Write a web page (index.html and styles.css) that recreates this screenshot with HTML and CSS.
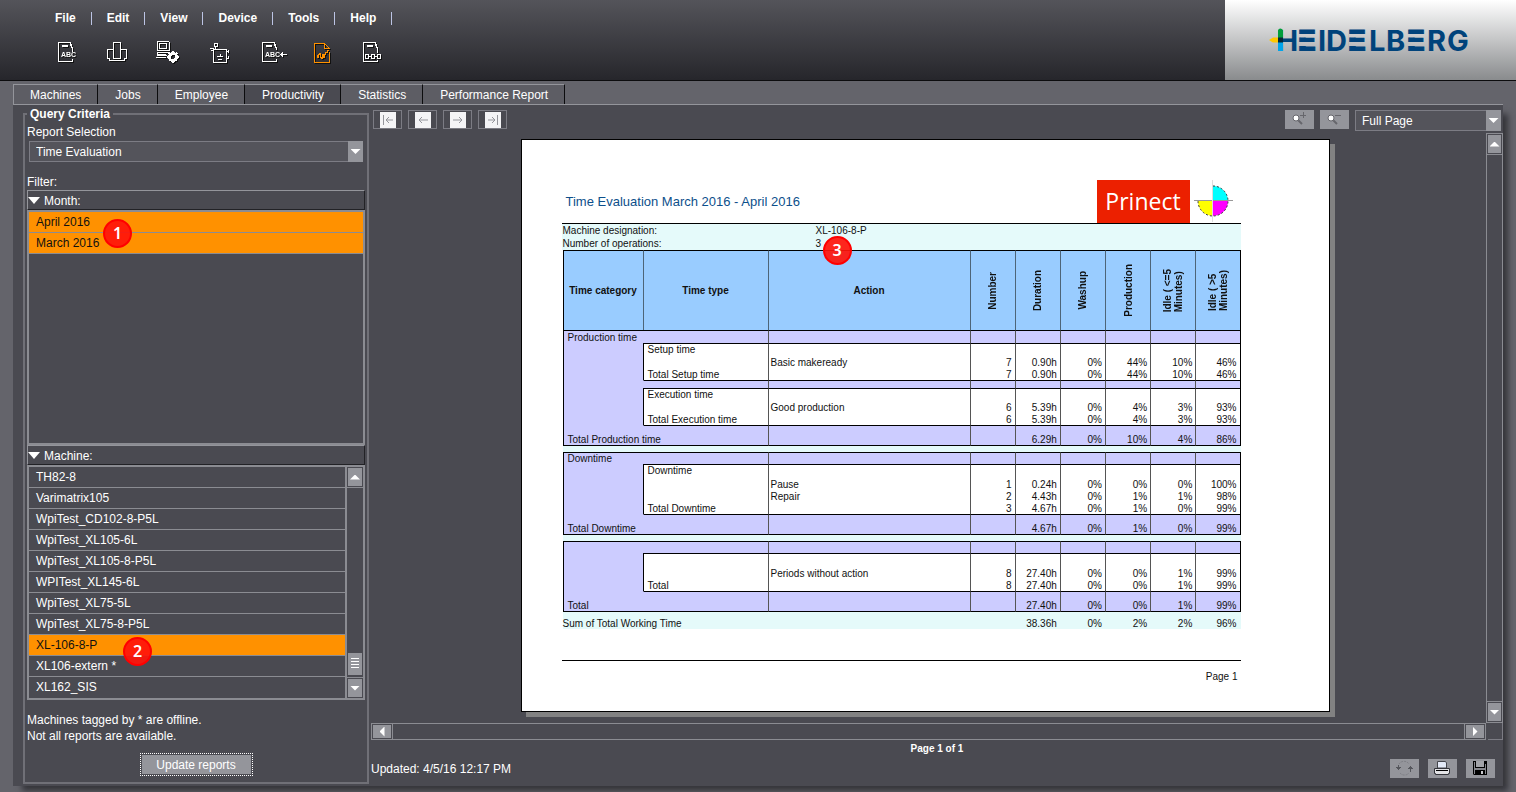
FILE: index.html
```html
<!DOCTYPE html>
<html lang="en">
<head>
    <meta charset="UTF-8">
    <meta name="viewport" content="width=device-width, initial-scale=1.0">
    <title>Heidelberg - Productivity</title>
    <link rel="stylesheet" href="styles.css">
</head>
<body>
    <header class="header">
        <div class="header-main">
            <nav class="menu">
                <a href="#">File</a>
                <a href="#">Edit</a>
                <a href="#">View</a>
                <a href="#">Device</a>
                <a href="#">Tools</a>
                <a href="#">Help</a>
            </nav>
            <div class="tools">
                <button type="button" aria-label="Job list">
                    <svg width="27" height="26" viewBox="0 0 27 26">
                        <path d="M17.5 3.5h-12v19h14v-3M17.5 3v4M18.5 5v4M19.5 8v5"/>
                        <path class="thick" d="M9 7h6"/>
                        <text x="8" y="18">ABC</text>
                    </svg>
                </button>
                <button type="button" aria-label="Machines">
                    <svg width="27" height="26" viewBox="0 0 27 26">
                        <path d="M9.500 19.500v-16h7v16zM9 10.500h-5.500v9h2v2h15v-2h2v-9h-6"/>
                    </svg>
                </button>
                <button type="button" aria-label="Device settings">
                    <svg width="27" height="26" viewBox="0 0 27 26">
                        <path d="M2.500 2.500h11l1 1v8h-12zM4.500 4.500h7v5h-7zM2 13.500h12M1.500 16.500h10M3 15.500h8M1 18.500h10M2.500 13v3"/>
                        <circle cx="18" cy="18" r="3.500" stroke-width="3"/>
                        <path stroke-width="2" d="M18 12v2M18 22v2M12 18h2M22 18h2M14 14l1 1M21 21l1 1M22 14l-1 1M14 22l1-1"/>
                    </svg>
                </button>
                <button type="button" aria-label="Operator">
                    <svg width="27" height="26" viewBox="0 0 27 26">
                        <path d="M8.500 4.500h3v3h-3zM9.500 8v2M4 9.500h3M5 11.500h3M7.500 9v14h13v-13h-13M11 17.500h6M12 20.500h4M14 15v3M20 12.500h3M20 19.500h3M22.500 11v3M22.500 17v3"/>
                    </svg>
                </button>
                <button type="button" aria-label="Import job">
                    <svg width="30" height="26" viewBox="0 0 30 26">
                        <path d="M17.500 3.500h-12v19h14v-3M17.500 3v4M18.500 5v4M19.500 8v3"/>
                        <path class="thick" d="M9 7h6"/>
                        <text x="8" y="18">ABC</text>
                        <path d="M23 15.500h7M24.500 14v3M25.500 13v5"/>
                    </svg>
                </button>
                <button type="button" class="active" aria-label="Reports">
                    <svg width="27" height="26" viewBox="0 0 27 26">
                        <path d="M16.500 4.500h-10v19h15v-11M16.500 4v5h5M17 5l4 4M9 16v2h1v-3h1v-1h1v4h1v1h1v-4h1v3h1v-3h1v-2h2v-2h2"/>
                    </svg>
                </button>
                <button type="button" aria-label="Workflow">
                    <svg width="27" height="26" viewBox="0 0 27 26">
                        <path d="M16.500 3.500h-12v19h14v-2M16.500 3v4M17.500 5v4M18.500 8v6M6.500 15.500h3v4h-3zM12.500 15.500h3v4h-3zM18.500 15.500h3v4h-3zM10 17.500h2M16 17.500h2"/>
                        <path class="thick" d="M8 7h6"/>
                    </svg>
                </button>
            </div>
        </div>
        <div class="brand">
            <svg width="200" height="40" viewBox="0 -8 200 40" role="img" aria-label="Heidelberg">
                <defs>
                    <!-- full height for every letter but E, three bars for each E -->
                    <clipPath id="bars">
                        <path d="M0-8h29v40H0zM49-8h31v40H49zM100-8h38v40h-38zM157-8h43v40h-43zM29 1h171v5H29zM29 9.400h171v4.700H29zM29 18h171v5H29z"/>
                    </clipPath>
                </defs>
                <text clip-path="url(#bars)" y="22.500" x="7.500 28 49 57 78 100 117 137 158 178">H<tspan class="bar-letter">E</tspan>ID<tspan class="bar-letter">E</tspan>LB<tspan class="bar-letter">E</tspan>RG</text>
                <path fill="#009d3c" d="M9 10V3a2.500 2.500 0 0 1 5 0v7z"/>
                <path fill="#00a4ea" d="M9 14h5v9H9z"/>
                <path fill="#ffc800" d="M9 9.500v5H4L0 12l4-2.500z"/>
                <path fill="#06283a" d="M9 9.500h5v5H9z"/>
            </svg>
        </div>
    </header>

    <nav class="tabs">
        <a href="#">Machines</a>
        <a href="#">Jobs</a>
        <a href="#">Employee</a>
        <a href="#" class="current">Productivity</a>
        <a href="#">Statistics</a>
        <a href="#">Performance Report</a>
    </nav>

    <main class="panel">
        <fieldset class="criteria">
            <legend>Query Criteria</legend>
            <label class="field-label" for="report">Report Selection</label>
            <div class="dropdown report-select">
                <select id="report">
                    <option>Time Evaluation</option>
                </select>
                <span class="arrow"><i class="tri down"></i></span>
            </div>
            <div class="field-label filter-label">Filter:</div>

            <button type="button" class="group-head"><i class="tri down big"></i>Month:</button>
            <div class="list">
                <ul>
                    <li class="selected">April 2016 <span class="badge badge-month">1</span></li>
                    <li class="selected">March 2016</li>
                </ul>
            </div>

            <button type="button" class="group-head"><i class="tri down big"></i>Machine:</button>
            <div class="list">
                <ul>
                    <li>TH82-8</li>
                    <li>Varimatrix105</li>
                    <li>WpiTest_CD102-8-P5L</li>
                    <li>WpiTest_XL105-6L</li>
                    <li>WpiTest_XL105-8-P5L</li>
                    <li>WPITest_XL145-6L</li>
                    <li>WpiTest_XL75-5L</li>
                    <li>WpiTest_XL75-8-P5L</li>
                    <li class="selected">XL-106-8-P <span class="badge badge-machine">2</span></li>
                    <li>XL106-extern *</li>
                    <li>XL162_SIS</li>
                </ul>
                <div class="list-scroll">
                    <button type="button" aria-label="Scroll up"><i class="tri up"></i></button>
                    <div class="track"><div class="thumb"></div></div>
                    <button type="button" aria-label="Scroll down"><i class="tri down"></i></button>
                </div>
            </div>

            <p class="note">Machines tagged by * are offline.<br>Not all reports are available.</p>
            <button type="button" class="update">Update reports</button>
        </fieldset>

        <section class="viewer">
            <div class="toolbar">
                <button type="button" class="nav-btn" aria-label="First page">
                    <svg width="16" height="16" viewBox="0 0 16 16"><path d="M3.500 3v10M6 8h7M6 8l3-3M6 8l3 3"/></svg>
                </button>
                <button type="button" class="nav-btn" aria-label="Previous page">
                    <svg width="16" height="16" viewBox="0 0 16 16"><path d="M4 8h9M4 8l3-3M4 8l3 3"/></svg>
                </button>
                <button type="button" class="nav-btn" aria-label="Next page">
                    <svg width="16" height="16" viewBox="0 0 16 16"><path d="M3 8h9M12 8l-3-3M12 8l-3 3"/></svg>
                </button>
                <button type="button" class="nav-btn" aria-label="Last page">
                    <svg width="16" height="16" viewBox="0 0 16 16"><path d="M12.500 3v10M3 8h7M10 8l-3-3M10 8l-3 3"/></svg>
                </button>
                <button type="button" class="icon-btn zoom-in" aria-label="Zoom in">
                    <svg width="29" height="19" viewBox="0 0 29 19">
                        <path stroke="#66666c" stroke-width="2" d="M13 10l4 4"/>
                        <circle cx="11" cy="8" r="3" fill="#fff" stroke="#66666c"/>
                        <path stroke="#66666c" d="M15 5.500h6M18.500 2v6"/>
                    </svg>
                </button>
                <button type="button" class="icon-btn" aria-label="Zoom out">
                    <svg width="29" height="19" viewBox="0 0 29 19">
                        <path stroke="#66666c" stroke-width="2" d="M13 10l4 4"/>
                        <circle cx="11" cy="8" r="3" fill="#fff" stroke="#66666c"/>
                        <path stroke="#66666c" d="M15 5.500h6"/>
                    </svg>
                </button>
                <div class="dropdown zoom-select">
                    <select aria-label="Zoom">
                        <option>Full Page</option>
                    </select>
                    <span class="arrow"><i class="tri down"></i></span>
                </div>
            </div>

            <div class="canvas">
                <article class="page">
                    <div class="page-head">
                        <h1>Time Evaluation March 2016 - April 2016</h1>
                        <div class="prinect">Prinect</div>
                        <svg width="43" height="43" viewBox="0 0 43 43">
                            <path fill="#0ff" d="M23 21V6a15 15 0 0 1 15 15z"/>
                            <path fill="#f0f" d="M23 21h15a15 15 0 0 1-15 15z"/>
                            <path fill="#ff0" d="M23 21v15A15 15 0 0 1 8 21z"/>
                            <path fill="none" stroke="#333" stroke-dasharray="2 2" d="M23 6a15 15 0 1 1-15 15"/>
                            <path stroke="#999" d="M4 20.500h39"/>
                            <path stroke="#ddd" d="M22.500 0v42"/>
                        </svg>
                    </div>
                    <dl class="meta">
                        <dt>Machine designation:</dt>
                        <dd>XL-106-8-P</dd>
                        <dt>Number of operations:</dt>
                        <dd>3 <span class="badge badge-report">3</span></dd>
                    </dl>
                    <table class="report">
                        <colgroup>
                            <col class="c-cat"><col class="c-type"><col class="c-action">
                            <col span="6">
                        </colgroup>
                        <thead>
                            <tr>
                                <th>Time category</th>
                                <th>Time type</th>
                                <th>Action</th>
                                <th><span>Number</span></th>
                                <th><span>Duration</span></th>
                                <th><span>Washup</span></th>
                                <th><span>Production</span></th>
                                <th><span>Idle ( &lt;=5<br>Minutes)</span></th>
                                <th><span>Idle ( &gt;5<br>Minutes)</span></th>
                            </tr>
                        </thead>
                        <tbody>
                            <tr class="group"><td colspan="2">Production time</td><td></td><td></td><td></td><td></td><td></td><td></td><td></td></tr>
                            <tr class="first"><td></td><td>Setup time</td><td></td><td></td><td></td><td></td><td></td><td></td><td></td></tr>
                            <tr><td></td><td></td><td>Basic makeready</td><td>7</td><td>0.90h</td><td>0%</td><td>44%</td><td>10%</td><td>46%</td></tr>
                            <tr><td></td><td>Total Setup time</td><td></td><td>7</td><td>0.90h</td><td>0%</td><td>44%</td><td>10%</td><td>46%</td></tr>
                            <tr class="divider"><td></td><td></td><td></td><td></td><td></td><td></td><td></td><td></td><td></td></tr>
                            <tr class="first"><td></td><td>Execution time</td><td></td><td></td><td></td><td></td><td></td><td></td><td></td></tr>
                            <tr><td></td><td></td><td>Good production</td><td>6</td><td>5.39h</td><td>0%</td><td>4%</td><td>3%</td><td>93%</td></tr>
                            <tr><td></td><td>Total Execution time</td><td></td><td>6</td><td>5.39h</td><td>0%</td><td>4%</td><td>3%</td><td>93%</td></tr>
                            <tr class="total"><td></td><td></td><td></td><td></td><td></td><td></td><td></td><td></td><td></td></tr>
                            <tr class="total-text"><td colspan="2">Total Production time</td><td></td><td></td><td>6.29h</td><td>0%</td><td>10%</td><td>4%</td><td>86%</td></tr>
                            <tr class="gap"><td colspan="9"></td></tr>
                        </tbody>
                        <tbody class="tall">
                            <tr class="group"><td colspan="2">Downtime</td><td></td><td></td><td></td><td></td><td></td><td></td><td></td></tr>
                            <tr class="first"><td></td><td>Downtime</td><td></td><td></td><td></td><td></td><td></td><td></td><td></td></tr>
                            <tr><td></td><td></td><td>Pause</td><td>1</td><td>0.24h</td><td>0%</td><td>0%</td><td>0%</td><td>100%</td></tr>
                            <tr><td></td><td></td><td>Repair</td><td>2</td><td>4.43h</td><td>0%</td><td>1%</td><td>1%</td><td>98%</td></tr>
                            <tr><td></td><td>Total Downtime</td><td></td><td>3</td><td>4.67h</td><td>0%</td><td>1%</td><td>0%</td><td>99%</td></tr>
                            <tr class="total"><td></td><td></td><td></td><td></td><td></td><td></td><td></td><td></td><td></td></tr>
                            <tr class="total-text"><td colspan="2">Total Downtime</td><td></td><td></td><td>4.67h</td><td>0%</td><td>1%</td><td>0%</td><td>99%</td></tr>
                            <tr class="gap"><td colspan="9"></td></tr>
                        </tbody>
                        <tbody class="tall">
                            <tr class="group"><td colspan="2"></td><td></td><td></td><td></td><td></td><td></td><td></td><td></td></tr>
                            <tr class="first"><td></td><td></td><td></td><td></td><td></td><td></td><td></td><td></td><td></td></tr>
                            <tr><td></td><td></td><td>Periods without action</td><td>8</td><td>27.40h</td><td>0%</td><td>0%</td><td>1%</td><td>99%</td></tr>
                            <tr><td></td><td>Total</td><td></td><td>8</td><td>27.40h</td><td>0%</td><td>0%</td><td>1%</td><td>99%</td></tr>
                            <tr class="total"><td></td><td></td><td></td><td></td><td></td><td></td><td></td><td></td><td></td></tr>
                            <tr class="total-text"><td colspan="2">Total</td><td></td><td></td><td>27.40h</td><td>0%</td><td>0%</td><td>1%</td><td>99%</td></tr>
                        </tbody>
                        <tfoot>
                            <tr><td colspan="2">Sum of Total Working Time</td><td></td><td></td><td>38.36h</td><td>0%</td><td>2%</td><td>2%</td><td>96%</td></tr>
                        </tfoot>
                    </table>
                    <div class="page-foot">Page 1</div>
                </article>
            </div>
            <div class="scroll vertical">
                <button type="button" aria-label="Scroll up"><i class="tri up"></i></button>
                <button type="button" aria-label="Scroll down"><i class="tri down"></i></button>
            </div>
            <div class="scroll horizontal">
                <button type="button" aria-label="Scroll left"><i class="tri left"></i></button>
                <button type="button" aria-label="Scroll right"><i class="tri right"></i></button>
            </div>
            <div class="corner"></div>

            <div class="page-count">Page 1 of 1</div>
            <div class="status">
                <span>Updated: 4/5/16 12:17 PM</span>
                <button type="button" class="icon-btn" aria-label="Refresh">
                    <svg width="29" height="19" viewBox="0 0 29 19">
                        <path fill="none" stroke="#7d7e84" stroke-dasharray="2 1" d="M9 5a6 6 0 0 1 10 0M10 14a6 6 0 0 0 9 0"/>
                        <path stroke="#55565c" d="M8.500 6v5M6 8.500h5M7 9.500h3M20.500 7v6M18 9.500h5M19 8.500h3"/>
                    </svg>
                </button>
                <button type="button" class="icon-btn" aria-label="Print">
                    <svg width="29" height="19" viewBox="0 0 29 19">
                        <path fill="#e3e9f7" stroke="#44454b" d="M9.500 9V2.500h8l1 1.500v5z"/>
                        <path fill="#e3e3e6" stroke="#33343a" d="M6.500 9.500h15v5h-1v1h-13v-1h-1z"/>
                        <path stroke="#000" d="M8 11.500h12"/>
                    </svg>
                </button>
                <button type="button" class="icon-btn" aria-label="Save">
                    <svg width="29" height="19" viewBox="0 0 29 19">
                        <path fill="#000" d="M7 2h14v14H8l-1-1z"/>
                        <path fill="#a2a3a8" d="M10 2h8v6h-8z"/>
                        <path fill="#85868c" d="M8 3h1v12H8zM19 5h1v10h-1zM9 9h10v2H9z"/>
                        <path fill="#c9c9cd" d="M15 12h2v3h-2z"/>
                    </svg>
                </button>
            </div>
        </section>
    </main>
</body>
</html>
```
FILE: styles.css
```css
* {
    box-sizing: border-box;
}
body {
    margin: 0;
    min-height: 100vh;
    display: flex;
    flex-direction: column;
    background: #64646b;
    color: #fff;
    font-family: "Liberation Sans", Arial, sans-serif;
    font-size: 12px;
    line-height: 16px;
}
button, select {
    font: inherit;
    color: inherit;
    margin: 0;
    padding: 0;
    border: none;
    border-radius: 0;
    background: none;
}
a {
    color: inherit;
    text-decoration: none;
}
svg {
    display: block;
}

/* header */
.header {
    display: flex;
    height: 81px;
    border-bottom: 1px solid #0c0c0e;
}
.header-main {
    flex: 1;
    background: linear-gradient(#54545a, #26262b);
}
.menu {
    display: flex;
    padding: 12px 0 0 40px;
    font-weight: bold;
    line-height: 13px;
}
.menu a {
    padding: 0 15px;
    border-right: 1px solid #bcc4e4;
}
.tools {
    display: flex;
    padding: 14px 0 0 41px;
}
.tools button {
    width: 51px;
    padding-left: 12px;
}
.tools svg {
    fill: none;
    stroke: #fff;
    shape-rendering: crispEdges;
    filter: drop-shadow(1px 1px 0 #111);
}
.tools .thick {
    stroke-width: 2;
}
.tools text {
    fill: #fff;
    stroke: none;
    font-size: 7px;
    font-weight: bold;
}
.tools .active svg {
    stroke: #ff9100;
}
.brand {
    width: 291px;
    display: flex;
    align-items: center;
    justify-content: center;
    padding-right: 4px;
    background: linear-gradient(#fff, #898b8d);
}
.brand text {
    fill: #00437b;
    font-family: Inter, sans-serif;
    font-size: 29px;
    font-weight: 700;
}
.brand .bar-letter {
    font-family: "DejaVu Sans", sans-serif;
    stroke: #00437b;
    stroke-width: 1px;
}

/* tabs */
.tabs {
    display: flex;
    margin: 3px 13px 0;
    height: 21px;
    border-bottom: 1px solid #94959b;
}
.tabs a {
    padding: 2px 16px 2px 17px;
    line-height: 17px;
    background: #5d5d64;
    border-top: 1px solid #94959b;
    border-right: 1px solid #0c0c0e;
}
.tabs a:first-child {
    border-left: 1px solid #94959b;
    padding-left: 16px;
}
.tabs .current {
    background: #4a4a51;
}

.panel {
    flex: 1;
    display: flex;
    margin: 0 13px 7px;
    background: #4a4a51;
    box-shadow: 7px 7px 6px -2px #35353a;
}

/* query criteria */
.criteria {
    display: flex;
    flex-direction: column;
    width: 346px;
    margin: 2px 2px 2px 10px;
    padding: 0 2px 6px;
    border: 2px solid #707077;
}
.criteria legend {
    padding: 0 3px;
    font-weight: bold;
    line-height: 14px;
}
.field-label {
    margin-top: 3px;
}
.filter-label {
    margin-top: 12px;
}
.dropdown {
    display: flex;
    height: 21px;
    border: 1px solid #7c7c84;
    background: #54545b;
}
.dropdown select {
    flex: 1;
    padding-left: 6px;
    appearance: none;
}
.report-select {
    margin: 1px 2px 0;
}
.arrow {
    display: flex;
    align-items: center;
    justify-content: center;
    width: 15px;
    margin: -1px;
    background: #94959b;
    pointer-events: none;
}
.tri {
    width: 10px;
    height: 5px;
    background: #fff;
}
.tri.down {
    clip-path: polygon(0 0, 100% 0, 50% 100%);
}
.tri.up {
    clip-path: polygon(50% 0, 100% 100%, 0 100%);
}
.tri.left, .tri.right {
    width: 5px;
    height: 10px;
}
.tri.left {
    clip-path: polygon(0 50%, 100% 0, 100% 100%);
}
.tri.right {
    clip-path: polygon(0 0, 100% 50%, 0 100%);
}
.tri.big {
    width: 12px;
    height: 7px;
    margin-right: 4px;
}
.group-head {
    display: flex;
    align-items: center;
    height: 20px;
    padding-top: 1px;
    border: 1px solid;
    border-color: #94959b #222226 #222226 #94959b;
}
.list {
    flex: 1;
    display: flex;
    min-height: 235px;
    border: 2px solid #8b8c92;
}
.list ul {
    flex: 1;
    margin: 0;
    padding: 0;
    list-style: none;
}
.list li {
    position: relative;
    height: 21px;
    padding: 2px 7px;
    border-bottom: 1px solid #8b8c92;
}
.list li:nth-child(11) {
    border-bottom: none;
}
.list .selected {
    background: #ff9100;
    color: #111;
}
.list-scroll {
    display: flex;
    flex-direction: column;
    width: 18px;
    border-left: 2px solid #8b8c92;
}
.list-scroll button, .scroll button {
    display: flex;
    align-items: center;
    justify-content: center;
    height: 18px;
    margin: 1px;
    background: #94959b;
}
.track {
    flex: 1;
    display: flex;
    flex-direction: column;
    justify-content: flex-end;
    padding: 0 1px 2px;
    border-top: 1px solid #8b8c92;
    border-bottom: 1px solid #8b8c92;
}
.thumb {
    height: 22px;
    border: solid #94959b;
    border-width: 5px 3px;
    background: repeating-linear-gradient(#fff 0 1px, #94959b 1px 3px);
}
.note {
    margin: 12px 0 9px;
}
.update {
    align-self: center;
    width: 113px;
    height: 23px;
    border: 1px dotted #fff;
    padding: 1px;
    background: #94959b content-box;
}

/* numbered callouts */
.badge {
    position: absolute;
    z-index: 1;
    width: 29px;
    height: 29px;
    border: 2px solid #f00;
    border-radius: 50%;
    background: rgba(255, 20, 10, 0.92);
    color: #fff;
    font-family: "Noto Sans", sans-serif;
    font-size: 16px;
    font-weight: 600;
    line-height: 24px;
    text-align: center;
}
.badge-month {
    left: 74px;
    top: 7px;
}
.badge-machine {
    left: 94px;
    top: 2px;
}
.badge-report {
    left: 261px;
    top: 12px;
}

/* viewer */
.viewer {
    flex: 1;
    display: grid;
    grid-template-columns: 1fr 17px;
    grid-template-rows: 28px 1fr 17px auto auto;
}
.toolbar, .page-count, .status {
    grid-column: 1 / 3;
}
.toolbar {
    display: flex;
    gap: 6px;
    padding: 5px 2px 0;
}
.nav-btn, .icon-btn {
    width: 29px;
    height: 19px;
}
.nav-btn {
    display: flex;
    align-items: center;
    justify-content: center;
    border: 1px solid #7c7c84;
}
.nav-btn svg {
    background: #f4f4f6;
    fill: none;
    stroke: #94959b;
}
.icon-btn {
    background: #94959b;
}
.zoom-in {
    margin-left: auto;
}
.zoom-select {
    width: 146px;
}
.canvas {
    display: flex;
    justify-content: center;
    align-items: flex-start;
    padding: 6px 7px 11px 0;
}
.page {
    width: 809px;
    min-height: 573px;
    padding: 40px 88px 0 40px;
    border: 1px solid #000;
    background: #fff;
    box-shadow: 5px 5px 0 #828282;
    color: #111;
    font-size: 10px;
    line-height: 11px;
}
.page-head {
    display: flex;
    align-items: center;
    height: 43px;
    padding: 0 8px 0 4px;
}
.page-head h1 {
    flex: 1;
    margin: 0;
    color: #0d4f8b;
    font-size: 13px;
    font-weight: normal;
    line-height: 16px;
}
.prinect {
    width: 93px;
    background: #ec2000;
    color: #fff;
    font-family: "Open Sans", sans-serif;
    font-size: 23px;
    line-height: 43px;
    text-align: center;
}
.meta {
    position: relative;
    display: grid;
    grid-template-columns: 253px 1fr;
    margin: 0;
    padding-left: 1px;
    border-top: 1px solid #000;
    background: #e5fafa;
    line-height: 13px;
}
.meta dd {
    margin: 0;
}
.report {
    width: 678px;
    margin-left: 1px;
    table-layout: fixed;
    border-collapse: separate;
    border-spacing: 0;
}
.c-cat {
    width: 80px;
}
.c-type {
    width: 125px;
}
.c-action {
    width: 202px;
}
.report th {
    height: 80px;
    padding: 0;
    border-top: 1px solid #000;
    border-left: 1px solid #4d6478;
    background: #9cf;
}
.report th span {
    display: inline-block;
    writing-mode: vertical-rl;
    transform: rotate(180deg);
    text-align: left;
    vertical-align: middle;
}
.report td {
    height: 12px;
    padding: 0 3px 0 2px;
    border-left: 1px solid #555;
    text-align: right;
    line-height: 11px;
    white-space: nowrap;
}
.report td:first-child {
    padding-left: 4px;
    background: #ccf;
    text-align: left;
}
.report th:first-child, .report td:first-child {
    border-left-color: #000;
}
.report th:last-child, .report td:last-child {
    border-right: 1px solid #000;
}
/* time type column of the plain rows */
.report td:first-child:not([colspan]) + td {
    padding-left: 4px;
    border-left-color: #000;
    text-align: left;
}
.report td:nth-last-child(7) {
    text-align: left;
}
.report .group td {
    height: 13px;
    border-top: 1px solid #000;
    background: #ccf;
}
.report .tall .group td {
    height: 12px;
}
.report .first td {
    height: 13px;
    vertical-align: top;
}
.report .tall .first td {
    height: 14px;
}
.report .first td + td, .report .divider td + td, .report .total td + td {
    border-top: 1px solid #000;
}
.report .divider td, .report .total td {
    height: 8px;
    line-height: 0;
    background: #ccf;
}
.report .divider td:nth-child(2), .report .total td:nth-child(2) {
    border-left-color: #ccf !important;
}
.report .total-text td {
    border-bottom: 1px solid #000;
    height: 13px;
    background: #ccf;
}
.report .gap td {
    height: 6px;
    border: none;
    background: #e5fafa;
    line-height: 0;
}
.report tfoot td, .report tfoot td:first-child, .report tfoot td:last-child {
    height: 17px;
    padding-left: 0;
    border-color: transparent;
    background: #e5fafa;
    vertical-align: bottom;
}
.report tfoot td:first-child {
    border-left: none;
}
.page-foot {
    margin-top: 31px;
    padding: 10px 3px 0;
    border-top: 1px solid #000;
    text-align: right;
}
.scroll {
    display: flex;
    justify-content: space-between;
    border: 1px solid #8b8c92;
}
.vertical {
    flex-direction: column;
}
.scroll button {
    margin: 0;
    outline: 1px solid #8b8c92;
    border: 1px solid #4a4a51;
}
.vertical button {
    height: 20px;
}
.horizontal button {
    width: 20px;
    height: 15px;
}
.corner {
    margin-left: 2px;
    border: solid #7c7c84;
    border-width: 0 1px 1px 0;
}
.page-count {
    padding-top: 2px;
    font-size: 10px;
    font-weight: bold;
    line-height: 13px;
    text-align: center;
}
.status {
    display: flex;
    gap: 9px;
    padding: 4px 8px 7px 0;
}
.status span {
    flex: 1;
    line-height: 20px;
}
```
